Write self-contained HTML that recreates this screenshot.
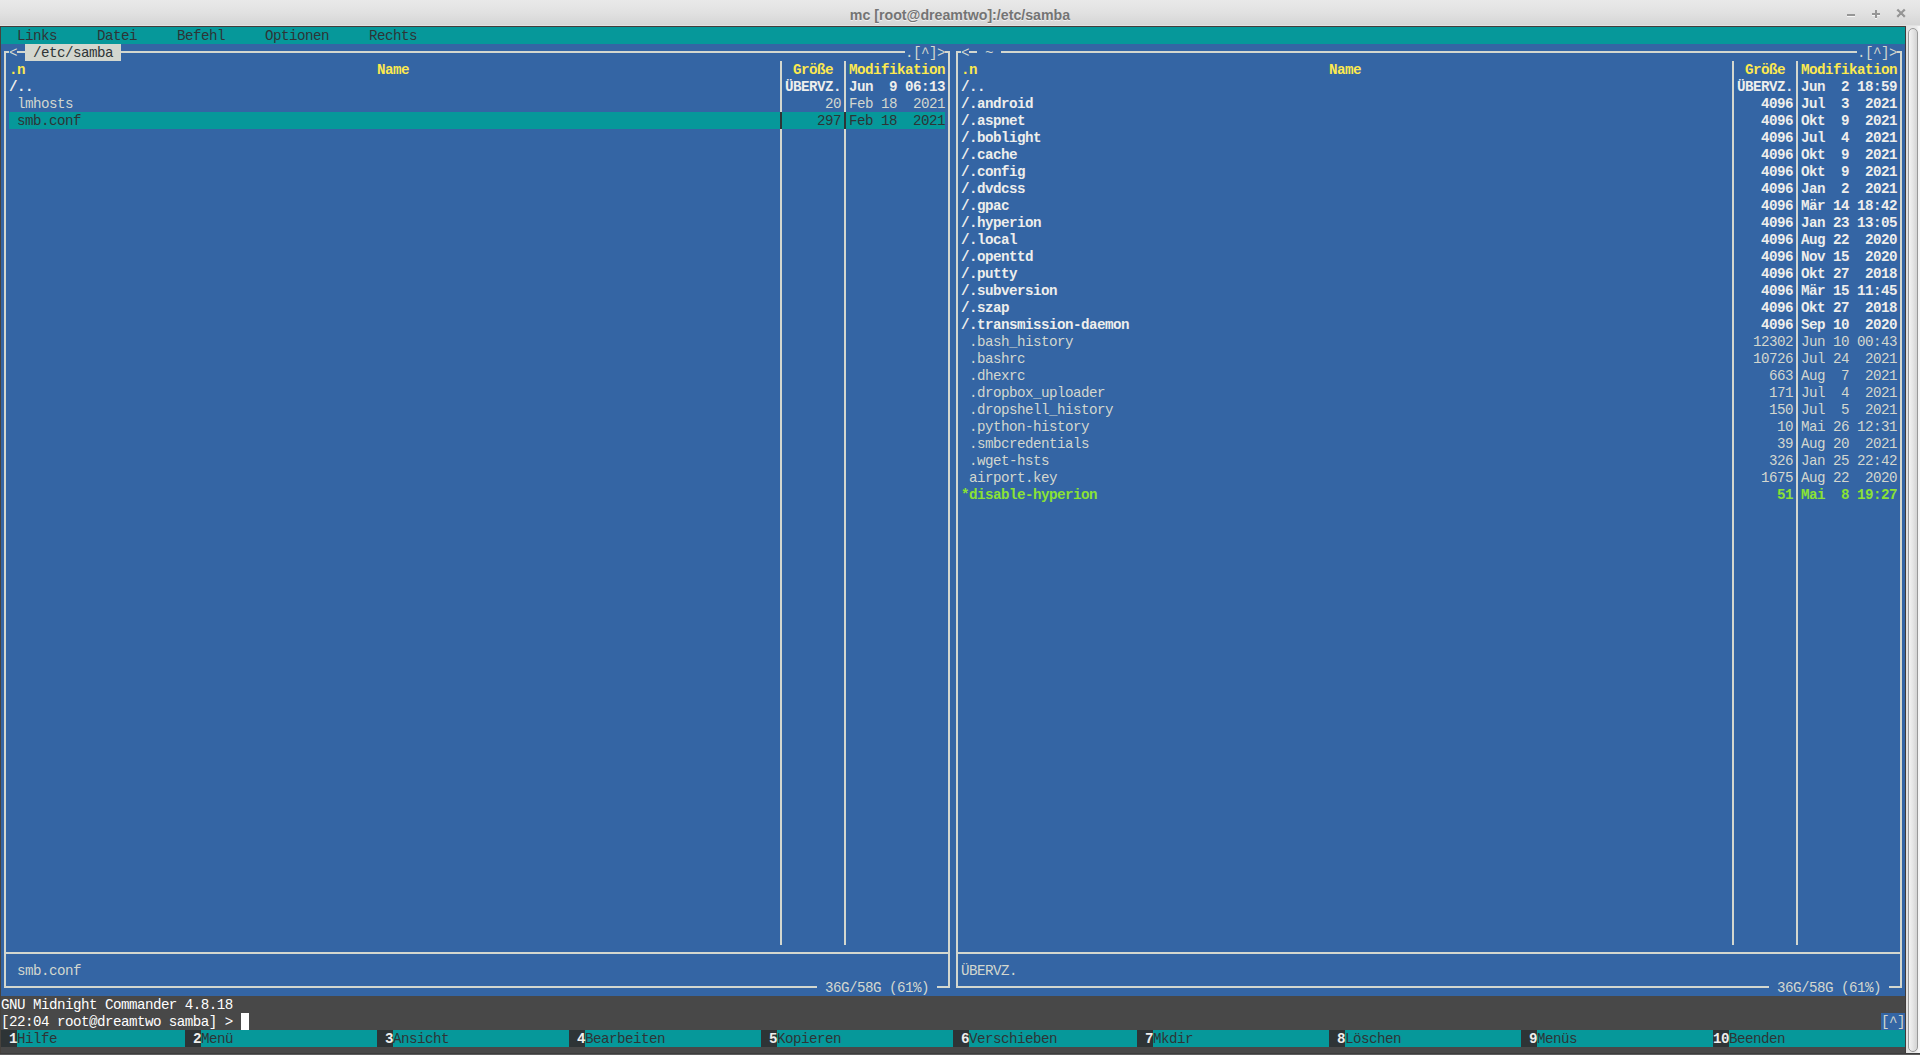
<!DOCTYPE html>
<html><head><meta charset="utf-8"><title>mc [root@dreamtwo]:/etc/samba</title>
<style>
html,body{margin:0;padding:0}
body{width:1920px;height:1055px;overflow:hidden;position:relative;background:#484848;font-family:"Liberation Sans",sans-serif}
#tb{position:absolute;left:0;top:0;width:1920px;height:26px;background:linear-gradient(#e9e9e9 0,#e2e2e2 12px,#d6d6d6 24.6px,#e1e1e1 25px,#e1e1e1 26px)}
#dl{position:absolute;left:0;top:26px;width:1906px;height:1px;background:#433c3b}
#tt{position:absolute;left:0;top:0;width:1920px;height:26px;line-height:30px;text-align:center;font-weight:bold;font-size:14.2px;color:#747474;text-shadow:0 1px 0 rgba(255,255,255,.6)}
#lb{position:absolute;left:0;top:27px;width:1px;height:1028px;background:#47423d}
#term{position:absolute;left:1px;top:27px;width:1904px;height:1028px;background:#484848;overflow:hidden}
#term div{position:absolute}
.t{position:absolute;white-space:pre;font-family:"Liberation Mono",monospace;font-size:14.2px;letter-spacing:-0.5200px;line-height:17px;height:17px;margin-top:1px}
.s{color:#fff} .n{color:#d3d7cf} .w{color:#eeeeec} .y{color:#fce94f} .g{color:#8ae234} .d{color:#2e3436} .b{font-weight:bold}
#sb{position:absolute;left:1905px;top:26px;width:15px;height:1028px;background:linear-gradient(90deg,#dedede 0,#e4e4e4 3px,#ececec 12px,#f5f5f5 13px,#f8f8f8 100%)}
#sv{position:absolute;left:1905px;top:27px;width:1px;height:1027px;background:#3f3b3a}
#th{position:absolute;left:3px;top:2px;width:8px;height:1022px;border:1px solid #999;border-radius:5px;background:linear-gradient(90deg,#f3f3f3,#e6e6e6 45%,#d3d3d3)}
#bt{position:absolute;left:0;top:1053px;width:1920px;height:2px;background:linear-gradient(#3d3d3d 0,#3d3d3d 1px,#5c5c5c 1px)}
</style></head><body>
<div id="tb"></div><div id="tt">mc [root@dreamtwo]:/etc/samba</div>
<svg id="wbs" width="80" height="26" viewBox="0 0 80 26" style="position:absolute;left:1840px;top:0">
<g fill="#f6f6f6"><rect x="7" y="15" width="8" height="2"/><rect x="32" y="14" width="8" height="2"/><rect x="35" y="11" width="2" height="8"/></g>
<path d="M58 11 L64 17 M64 11 L58 17" stroke="#f6f6f6" stroke-width="2.2" fill="none"/>
<g fill="#969696"><rect x="7" y="14" width="8" height="2"/><rect x="32" y="13" width="8" height="2"/><rect x="35" y="10" width="2" height="8"/></g>
<path d="M57.3 9.5 L64.8 16.9 M64.8 9.5 L57.3 16.9" stroke="#969696" stroke-width="2.3" fill="none"/>
</svg>
<div id="lb"></div>
<div id="term">
<div style="left:0px;top:0px;width:1904px;height:17px;background:#06989a;"></div>
<div style="left:0px;top:17px;width:1904px;height:952px;background:#3465a4;"></div>
<div style="left:0px;top:1003px;width:1904px;height:17px;background:#06989a;"></div>
<span class="t d" style="left:16px;top:0px">Links</span>
<span class="t d" style="left:96px;top:0px">Datei</span>
<span class="t d" style="left:176px;top:0px">Befehl</span>
<span class="t d" style="left:264px;top:0px">Optionen</span>
<span class="t d" style="left:368px;top:0px">Rechts</span>
<div style="left:3px;top:24px;width:5px;height:2px;background:#d3d7cf;"></div>
<div style="left:3px;top:24px;width:2px;height:10px;background:#d3d7cf;"></div>
<span class="t n" style="left:8px;top:17px">&lt;</span>
<div style="left:16px;top:24px;width:8px;height:2px;background:#d3d7cf;"></div>
<div style="left:24px;top:17px;width:96px;height:17px;background:#d3d7cf;"></div>
<span class="t d" style="left:24px;top:17px"> /etc/samba </span>
<div style="left:120px;top:24px;width:784px;height:2px;background:#d3d7cf;"></div>
<span class="t n" style="left:904px;top:17px">.[^]&gt;</span>
<div style="left:944px;top:24px;width:5px;height:2px;background:#d3d7cf;"></div>
<div style="left:947px;top:24px;width:2px;height:10px;background:#d3d7cf;"></div>
<div style="left:3px;top:34px;width:2px;height:918px;background:#d3d7cf;"></div>
<div style="left:947px;top:34px;width:2px;height:918px;background:#d3d7cf;"></div>
<div style="left:779px;top:34px;width:2px;height:884px;background:#d3d7cf;"></div>
<div style="left:843px;top:34px;width:2px;height:884px;background:#d3d7cf;"></div>
<span class="t y b" style="left:8px;top:34px">.n</span>
<span class="t y b" style="left:376px;top:34px">Name</span>
<span class="t y b" style="left:792px;top:34px">Größe</span>
<span class="t y b" style="left:848px;top:34px">Modifikation</span>
<div style="left:3px;top:925px;width:946px;height:2px;background:#d3d7cf;"></div>
<span class="t n" style="left:8px;top:935px"> smb.conf</span>
<div style="left:3px;top:959px;width:813px;height:2px;background:#d3d7cf;"></div>
<div style="left:3px;top:952px;width:2px;height:9px;background:#d3d7cf;"></div>
<span class="t n" style="left:824px;top:952px">36G/58G (61%)</span>
<div style="left:936px;top:959px;width:13px;height:2px;background:#d3d7cf;"></div>
<div style="left:947px;top:952px;width:2px;height:9px;background:#d3d7cf;"></div>
<span class="t w b" style="left:8px;top:51px">/..</span>
<span class="t w b" style="left:784px;top:51px">ÜBERVZ.</span>
<span class="t w b" style="left:848px;top:51px">Jun  9 06:13</span>
<span class="t n" style="left:8px;top:68px"> lmhosts</span>
<span class="t n" style="left:824px;top:68px">20</span>
<span class="t n" style="left:848px;top:68px">Feb 18  2021</span>
<div style="left:8px;top:85px;width:936px;height:17px;background:#06989a;"></div>
<div style="left:779px;top:85px;width:2px;height:17px;background:#2e3436;"></div>
<div style="left:843px;top:85px;width:2px;height:17px;background:#2e3436;"></div>
<span class="t d" style="left:8px;top:85px"> smb.conf</span>
<span class="t d" style="left:816px;top:85px">297</span>
<span class="t d" style="left:848px;top:85px">Feb 18  2021</span>
<div style="left:955px;top:24px;width:5px;height:2px;background:#d3d7cf;"></div>
<div style="left:955px;top:24px;width:2px;height:10px;background:#d3d7cf;"></div>
<span class="t n" style="left:960px;top:17px">&lt;</span>
<div style="left:968px;top:24px;width:8px;height:2px;background:#d3d7cf;"></div>
<span class="t n" style="left:976px;top:17px"> ~ </span>
<div style="left:1000px;top:24px;width:856px;height:2px;background:#d3d7cf;"></div>
<span class="t n" style="left:1856px;top:17px">.[^]&gt;</span>
<div style="left:1896px;top:24px;width:5px;height:2px;background:#d3d7cf;"></div>
<div style="left:1899px;top:24px;width:2px;height:10px;background:#d3d7cf;"></div>
<div style="left:955px;top:34px;width:2px;height:918px;background:#d3d7cf;"></div>
<div style="left:1899px;top:34px;width:2px;height:918px;background:#d3d7cf;"></div>
<div style="left:1731px;top:34px;width:2px;height:884px;background:#d3d7cf;"></div>
<div style="left:1795px;top:34px;width:2px;height:884px;background:#d3d7cf;"></div>
<span class="t y b" style="left:960px;top:34px">.n</span>
<span class="t y b" style="left:1328px;top:34px">Name</span>
<span class="t y b" style="left:1744px;top:34px">Größe</span>
<span class="t y b" style="left:1800px;top:34px">Modifikation</span>
<div style="left:955px;top:925px;width:946px;height:2px;background:#d3d7cf;"></div>
<span class="t n" style="left:960px;top:935px">ÜBERVZ.</span>
<div style="left:955px;top:959px;width:813px;height:2px;background:#d3d7cf;"></div>
<div style="left:955px;top:952px;width:2px;height:9px;background:#d3d7cf;"></div>
<span class="t n" style="left:1776px;top:952px">36G/58G (61%)</span>
<div style="left:1888px;top:959px;width:13px;height:2px;background:#d3d7cf;"></div>
<div style="left:1899px;top:952px;width:2px;height:9px;background:#d3d7cf;"></div>
<span class="t w b" style="left:960px;top:51px">/..</span>
<span class="t w b" style="left:1736px;top:51px">ÜBERVZ.</span>
<span class="t w b" style="left:1800px;top:51px">Jun  2 18:59</span>
<span class="t w b" style="left:960px;top:68px">/.android</span>
<span class="t w b" style="left:1760px;top:68px">4096</span>
<span class="t w b" style="left:1800px;top:68px">Jul  3  2021</span>
<span class="t w b" style="left:960px;top:85px">/.aspnet</span>
<span class="t w b" style="left:1760px;top:85px">4096</span>
<span class="t w b" style="left:1800px;top:85px">Okt  9  2021</span>
<span class="t w b" style="left:960px;top:102px">/.boblight</span>
<span class="t w b" style="left:1760px;top:102px">4096</span>
<span class="t w b" style="left:1800px;top:102px">Jul  4  2021</span>
<span class="t w b" style="left:960px;top:119px">/.cache</span>
<span class="t w b" style="left:1760px;top:119px">4096</span>
<span class="t w b" style="left:1800px;top:119px">Okt  9  2021</span>
<span class="t w b" style="left:960px;top:136px">/.config</span>
<span class="t w b" style="left:1760px;top:136px">4096</span>
<span class="t w b" style="left:1800px;top:136px">Okt  9  2021</span>
<span class="t w b" style="left:960px;top:153px">/.dvdcss</span>
<span class="t w b" style="left:1760px;top:153px">4096</span>
<span class="t w b" style="left:1800px;top:153px">Jan  2  2021</span>
<span class="t w b" style="left:960px;top:170px">/.gpac</span>
<span class="t w b" style="left:1760px;top:170px">4096</span>
<span class="t w b" style="left:1800px;top:170px">Mär 14 18:42</span>
<span class="t w b" style="left:960px;top:187px">/.hyperion</span>
<span class="t w b" style="left:1760px;top:187px">4096</span>
<span class="t w b" style="left:1800px;top:187px">Jan 23 13:05</span>
<span class="t w b" style="left:960px;top:204px">/.local</span>
<span class="t w b" style="left:1760px;top:204px">4096</span>
<span class="t w b" style="left:1800px;top:204px">Aug 22  2020</span>
<span class="t w b" style="left:960px;top:221px">/.openttd</span>
<span class="t w b" style="left:1760px;top:221px">4096</span>
<span class="t w b" style="left:1800px;top:221px">Nov 15  2020</span>
<span class="t w b" style="left:960px;top:238px">/.putty</span>
<span class="t w b" style="left:1760px;top:238px">4096</span>
<span class="t w b" style="left:1800px;top:238px">Okt 27  2018</span>
<span class="t w b" style="left:960px;top:255px">/.subversion</span>
<span class="t w b" style="left:1760px;top:255px">4096</span>
<span class="t w b" style="left:1800px;top:255px">Mär 15 11:45</span>
<span class="t w b" style="left:960px;top:272px">/.szap</span>
<span class="t w b" style="left:1760px;top:272px">4096</span>
<span class="t w b" style="left:1800px;top:272px">Okt 27  2018</span>
<span class="t w b" style="left:960px;top:289px">/.transmission-daemon</span>
<span class="t w b" style="left:1760px;top:289px">4096</span>
<span class="t w b" style="left:1800px;top:289px">Sep 10  2020</span>
<span class="t n" style="left:960px;top:306px"> .bash_history</span>
<span class="t n" style="left:1752px;top:306px">12302</span>
<span class="t n" style="left:1800px;top:306px">Jun 10 00:43</span>
<span class="t n" style="left:960px;top:323px"> .bashrc</span>
<span class="t n" style="left:1752px;top:323px">10726</span>
<span class="t n" style="left:1800px;top:323px">Jul 24  2021</span>
<span class="t n" style="left:960px;top:340px"> .dhexrc</span>
<span class="t n" style="left:1768px;top:340px">663</span>
<span class="t n" style="left:1800px;top:340px">Aug  7  2021</span>
<span class="t n" style="left:960px;top:357px"> .dropbox_uploader</span>
<span class="t n" style="left:1768px;top:357px">171</span>
<span class="t n" style="left:1800px;top:357px">Jul  4  2021</span>
<span class="t n" style="left:960px;top:374px"> .dropshell_history</span>
<span class="t n" style="left:1768px;top:374px">150</span>
<span class="t n" style="left:1800px;top:374px">Jul  5  2021</span>
<span class="t n" style="left:960px;top:391px"> .python-history</span>
<span class="t n" style="left:1776px;top:391px">10</span>
<span class="t n" style="left:1800px;top:391px">Mai 26 12:31</span>
<span class="t n" style="left:960px;top:408px"> .smbcredentials</span>
<span class="t n" style="left:1776px;top:408px">39</span>
<span class="t n" style="left:1800px;top:408px">Aug 20  2021</span>
<span class="t n" style="left:960px;top:425px"> .wget-hsts</span>
<span class="t n" style="left:1768px;top:425px">326</span>
<span class="t n" style="left:1800px;top:425px">Jan 25 22:42</span>
<span class="t n" style="left:960px;top:442px"> airport.key</span>
<span class="t n" style="left:1760px;top:442px">1675</span>
<span class="t n" style="left:1800px;top:442px">Aug 22  2020</span>
<span class="t g b" style="left:960px;top:459px">*disable-hyperion</span>
<span class="t g b" style="left:1776px;top:459px">51</span>
<span class="t g b" style="left:1800px;top:459px">Mai  8 19:27</span>
<span class="t s" style="left:0px;top:969px">GNU Midnight Commander 4.8.18</span>
<span class="t s" style="left:0px;top:986px">[22:04 root@dreamtwo samba] &gt; </span>
<div style="left:240px;top:986px;width:8px;height:17px;background:#ffffff;"></div>
<div style="left:1880px;top:986px;width:24px;height:17px;background:#3465a4;"></div>
<span class="t n" style="left:1880px;top:986px">[^]</span>
<div style="left:0px;top:1003px;width:16px;height:17px;background:#2e3436;"></div>
<span class="t w b" style="left:8px;top:1003px">1</span>
<span class="t d" style="left:16px;top:1003px">Hilfe</span>
<div style="left:184px;top:1003px;width:16px;height:17px;background:#2e3436;"></div>
<span class="t w b" style="left:192px;top:1003px">2</span>
<span class="t d" style="left:200px;top:1003px">Menü</span>
<div style="left:376px;top:1003px;width:16px;height:17px;background:#2e3436;"></div>
<span class="t w b" style="left:384px;top:1003px">3</span>
<span class="t d" style="left:392px;top:1003px">Ansicht</span>
<div style="left:568px;top:1003px;width:16px;height:17px;background:#2e3436;"></div>
<span class="t w b" style="left:576px;top:1003px">4</span>
<span class="t d" style="left:584px;top:1003px">Bearbeiten</span>
<div style="left:760px;top:1003px;width:16px;height:17px;background:#2e3436;"></div>
<span class="t w b" style="left:768px;top:1003px">5</span>
<span class="t d" style="left:776px;top:1003px">Kopieren</span>
<div style="left:952px;top:1003px;width:16px;height:17px;background:#2e3436;"></div>
<span class="t w b" style="left:960px;top:1003px">6</span>
<span class="t d" style="left:968px;top:1003px">Verschieben</span>
<div style="left:1136px;top:1003px;width:16px;height:17px;background:#2e3436;"></div>
<span class="t w b" style="left:1144px;top:1003px">7</span>
<span class="t d" style="left:1152px;top:1003px">Mkdir</span>
<div style="left:1328px;top:1003px;width:16px;height:17px;background:#2e3436;"></div>
<span class="t w b" style="left:1336px;top:1003px">8</span>
<span class="t d" style="left:1344px;top:1003px">Löschen</span>
<div style="left:1520px;top:1003px;width:16px;height:17px;background:#2e3436;"></div>
<span class="t w b" style="left:1528px;top:1003px">9</span>
<span class="t d" style="left:1536px;top:1003px">Menüs</span>
<div style="left:1712px;top:1003px;width:16px;height:17px;background:#2e3436;"></div>
<span class="t w b" style="left:1712px;top:1003px">10</span>
<span class="t d" style="left:1728px;top:1003px">Beenden</span>
</div>
<div id="sb"><div id="th"></div></div><div id="sv"></div><div id="dl"></div>
<div id="bt"></div>
</body></html>
